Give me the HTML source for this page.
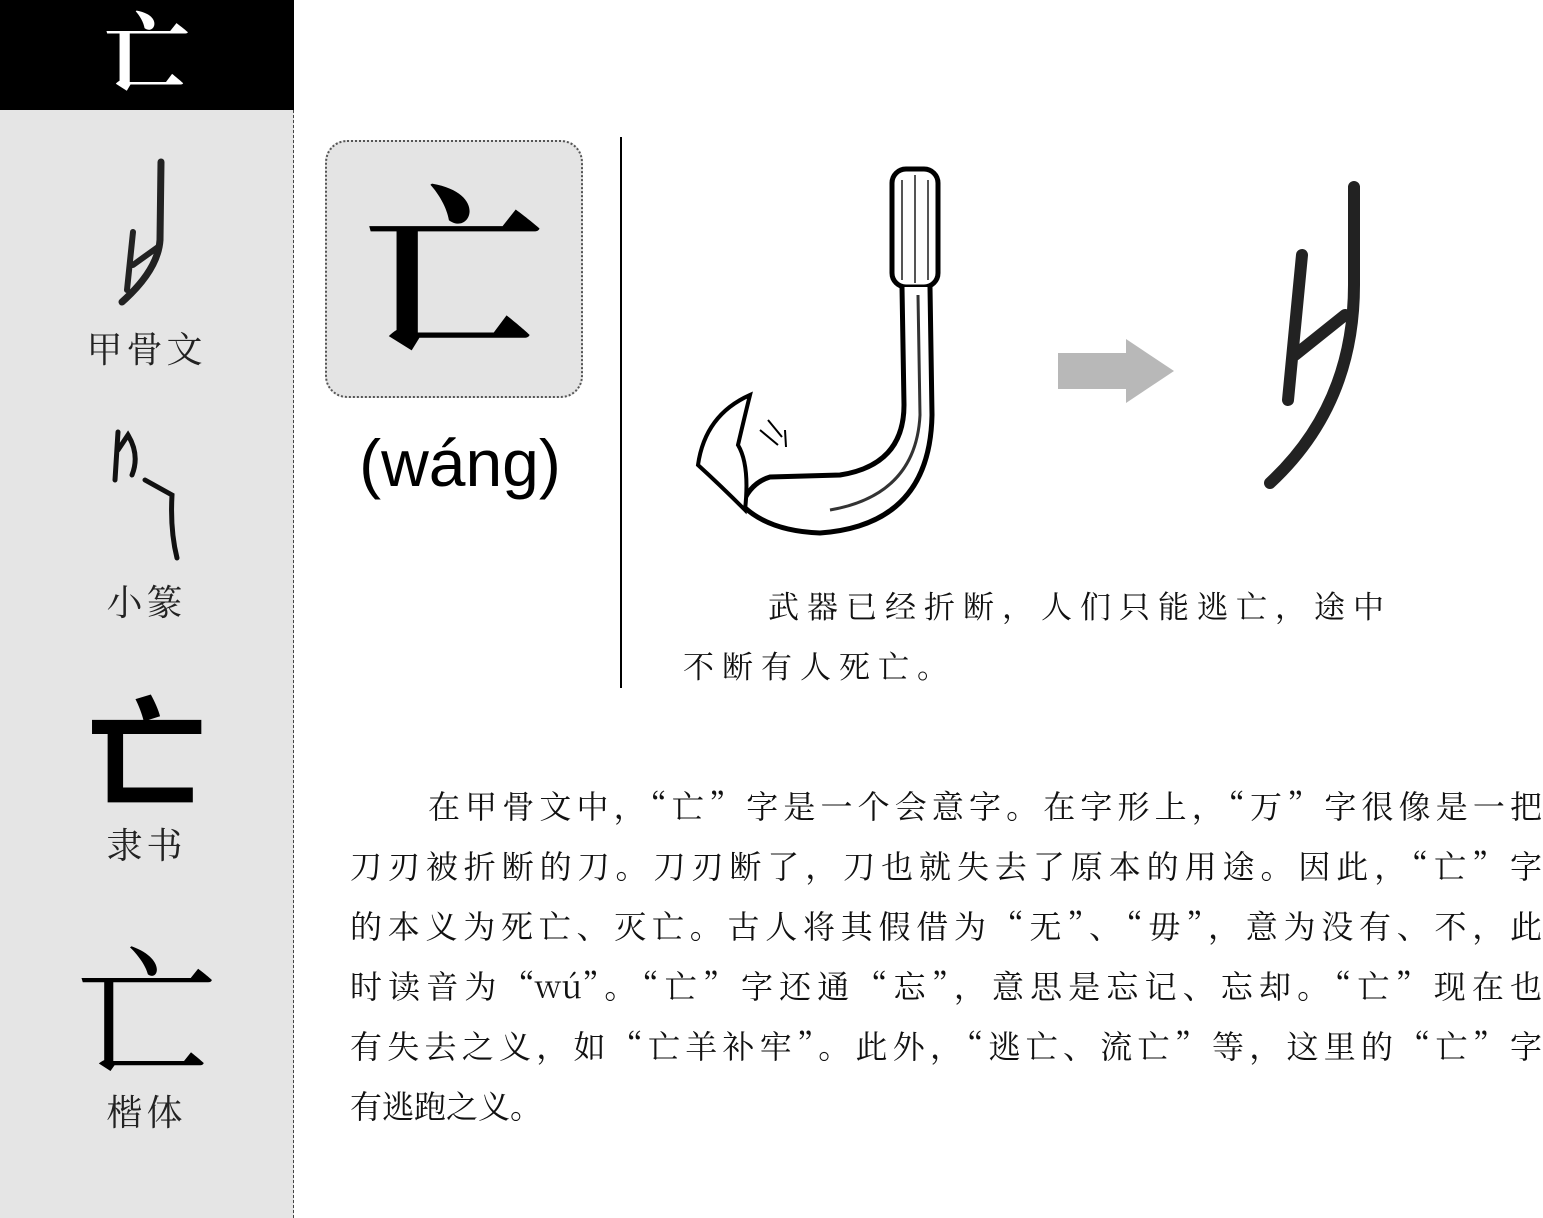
<!DOCTYPE html>
<html><head><meta charset="utf-8"><style>
body{margin:0;width:1543px;height:1218px;position:relative;background:#fff;overflow:hidden;font-family:"Liberation Serif","Noto Serif CJK SC",serif;}
.side{position:absolute;left:0;top:0;width:293px;height:1218px;background:#e5e5e5;border-right:1px dashed #444;}
.top{position:absolute;left:0;top:0;width:294px;height:110px;background:#000;color:#fff;font-size:86px;text-align:center;line-height:110px;font-weight:bold;}
.lab{position:absolute;left:0;width:293px;text-align:center;font-size:36px;color:#222;letter-spacing:4px;}
.box{position:absolute;left:325px;top:140px;width:258px;height:258px;background:#e4e4e4;border:2px dotted #555;border-radius:22px;box-sizing:border-box;text-align:center;font-size:180px;line-height:270px;font-weight:bold;}
.py{position:absolute;left:325px;width:270px;top:425px;text-align:center;font-family:"Liberation Sans",sans-serif;font-size:66px;}
.vl{position:absolute;left:620px;top:137px;width:2px;height:551px;background:#000;}
.cap{position:absolute;font-family:"Noto Serif CJK SC",serif;font-size:31px;letter-spacing:8px;color:#111;line-height:40px;}
.para{position:absolute;left:350px;top:775px;width:1192px;font-family:"Noto Serif CJK SC",serif;font-size:32px;line-height:60px;color:#111;}
.para div{text-align:justify;text-align-last:justify;white-space:nowrap;}
.para div.l{text-align-last:left;}
</style></head><body>
<div class="side"></div>
<div class="top">亡</div>
<svg style="position:absolute;left:0;top:110px" width="293" height="1108">
<path d="M161 52 L160 130 Q158 160 122 192" stroke="#222" stroke-width="7" fill="none" stroke-linecap="round"/>
<path d="M133 122 L127 180 M133 155 L158 137" stroke="#222" stroke-width="6" fill="none" stroke-linecap="round"/>
<path d="M118 322 L115 370 M118 340 L128 325 Q140 345 132 365 M145 370 L172 385 Q170 420 177 448" stroke="#111" stroke-width="5" fill="none" stroke-linecap="round"/>
</svg>
<div class="lab" style="top:322px">甲骨文</div>
<div class="lab" style="top:575px">小篆</div>
<div style="position:absolute;left:0;width:293px;top:680px;text-align:center;font-size:120px;line-height:130px;font-family:'Noto Sans CJK SC',sans-serif;font-weight:bold">亡</div>
<div class="lab" style="top:818px">隶书</div>
<div style="position:absolute;left:0;width:293px;top:930px;text-align:center;font-size:140px;line-height:150px;font-family:'Noto Serif CJK SC',serif">亡</div>
<div class="lab" style="top:1085px">楷体</div>
<div class="box">亡</div>
<div class="py">(wáng)</div>
<div class="vl"></div>
<svg style="position:absolute;left:690px;top:165px" width="860" height="380">
<rect x="202" y="4" width="46" height="118" rx="14" fill="#fff" stroke="#000" stroke-width="5"/>
<path d="M212 15 V115 M225 10 V118 M238 15 V115" stroke="#555" stroke-width="2"/>
<path d="M212 122 L214 240 Q214 300 150 310 L80 312 Q60 318 52 340 Q78 366 130 368 Q240 360 242 250 L240 122" fill="#fff" stroke="#000" stroke-width="5"/>
<path d="M228 130 L230 250 Q226 330 140 345" stroke="#333" stroke-width="3" fill="none"/>
<path d="M60 230 Q15 250 8 300 Q30 320 55 345 Q60 300 48 280 Q55 250 60 230Z" fill="#fff" stroke="#000" stroke-width="4"/>
<path d="M70 265 L88 280 M78 255 L92 272 M95 265 L96 282" stroke="#000" stroke-width="2"/>
<rect x="368" y="188" width="70" height="36" fill="#b8b8b8"/>
<polygon points="436,174 484,206 436,238" fill="#b8b8b8"/>
<path d="M664 22 L664 120 Q664 240 580 318 M612 90 L598 235 M605 190 L655 150" stroke="#222" stroke-width="12" fill="none" stroke-linecap="round"/>
</svg>
<div class="cap" style="left:768px;top:585px">武器已经折断，人们只能逃亡，途中</div>
<div class="cap" style="left:683px;top:645px">不断有人死亡。</div>
<div class="para">
<div style="padding-left:78px">在甲骨文中，“亡”字是一个会意字。在字形上，“万”字很像是一把</div>
<div>刀刃被折断的刀。刀刃断了，刀也就失去了原本的用途。因此，“亡”字</div>
<div>的本义为死亡、灭亡。古人将其假借为“无”、“毋”，意为没有、不，此</div>
<div>时读音为“wú”。“亡”字还通“忘”，意思是忘记、忘却。“亡”现在也</div>
<div>有失去之义，如“亡羊补牢”。此外，“逃亡、流亡”等，这里的“亡”字</div>
<div class="l">有逃跑之义。</div>
</div>
</body></html>
